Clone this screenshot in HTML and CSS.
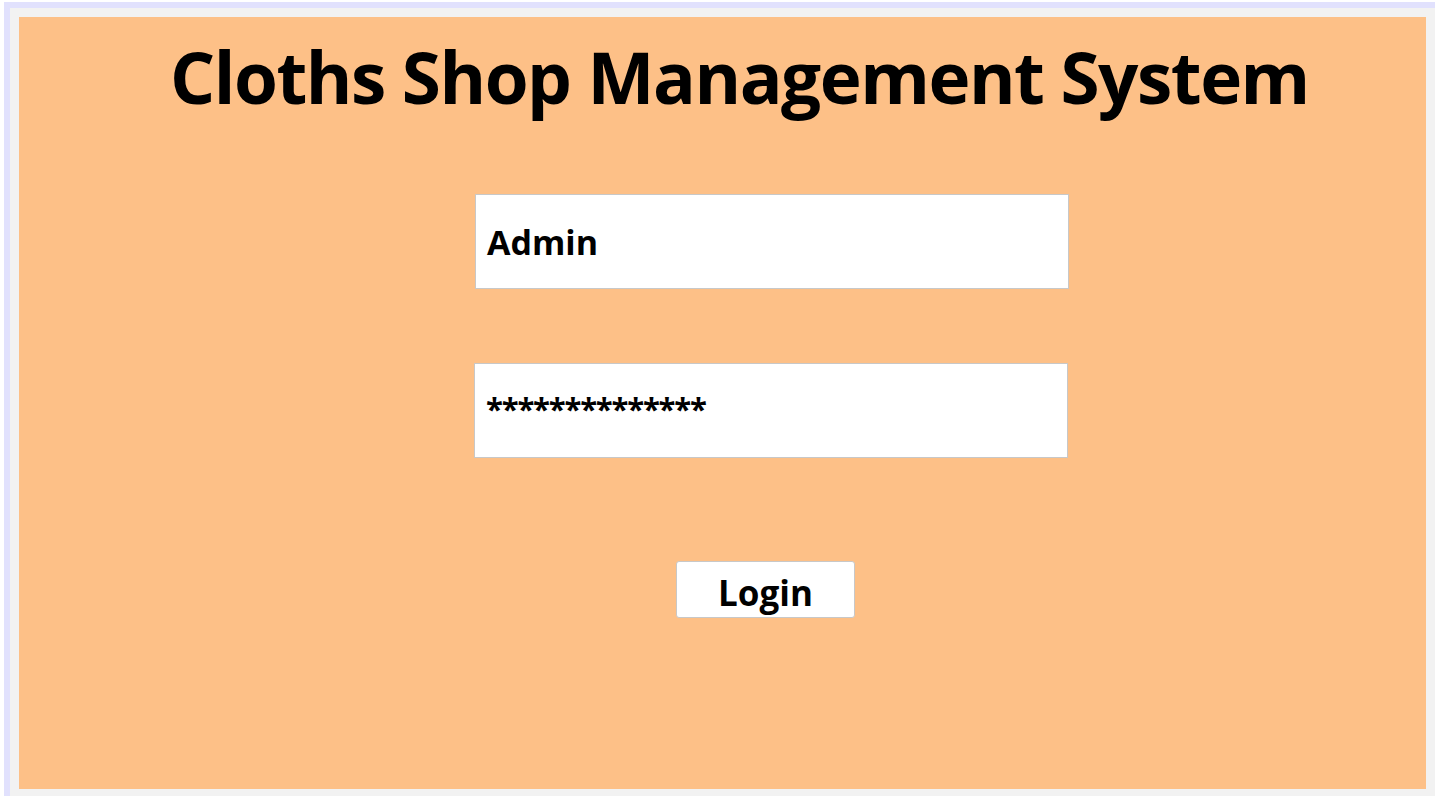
FILE: index.html
```html
<!DOCTYPE html>
<html>
<head>
<meta charset="utf-8">
<link rel="stylesheet" href="styles.css">
</head>
<body>
<div class="frame">
  <div class="panel">
    <h1 class="title">Cloths Shop Management System</h1>
    <div class="field field-user"><span class="field-text">Admin</span></div>
    <div class="field field-pass"><span class="field-text pass">**************</span></div>
    <button class="login" type="button">Login</button>
  </div>
</div>
</body>
</html>
```
FILE: styles.css
```css
html, body {
  margin: 0;
  padding: 0;
  background: #ffffff;
  overflow: hidden;
}
body {
  width: 1435px;
  height: 796px;
  font-family: "Open Sans", "Noto Sans", sans-serif;
}
.frame {
  margin: 2px 0 0 4px;
  border-top: 6px solid #e1e1fd;
  border-left: 6px solid #e1e1fd;
  background: #f2f2f2;
  padding: 9px 9px 7px 9px;
  height: 772px;
}
.panel {
  background: #fdc087;
  height: 772px;
  width: 1407px;
  display: flex;
  flex-direction: column;
  align-items: flex-start;
}
.title {
  margin: 20px 0 0 151px;
  font-size: 71px;
  font-weight: 700;
  line-height: 80px;
  color: #000;
  letter-spacing: -1.47px;
  white-space: nowrap;
}
.field {
  box-sizing: border-box;
  background: #fff;
  border: 1px solid #c8c8c8;
  width: 594px;
  height: 95px;
  display: flex;
  align-items: center;
  padding-left: 11px;
}
.field-user {
  margin: 77px 0 0 456px;
}
.field-pass {
  margin: 74px 0 0 455px;
}
.field-text {
  font-size: 34px;
  font-weight: 700;
  color: #000;
  line-height: 1;
}
.pass {
  margin-top: -4px;
  font-size: 31px;
  letter-spacing: -1.2px;
}
.login {
  box-sizing: border-box;
  margin: 103px 0 0 657px;
  width: 179px;
  height: 57px;
  background: #fff;
  border: 1px solid #c8c8c8;
  border-radius: 3px;
  font-family: "Open Sans", "Noto Sans", sans-serif;
  font-size: 35px;
  font-weight: 700;
  color: #000;
  padding: 5px 0 0 0;
  line-height: 1;
}
```
